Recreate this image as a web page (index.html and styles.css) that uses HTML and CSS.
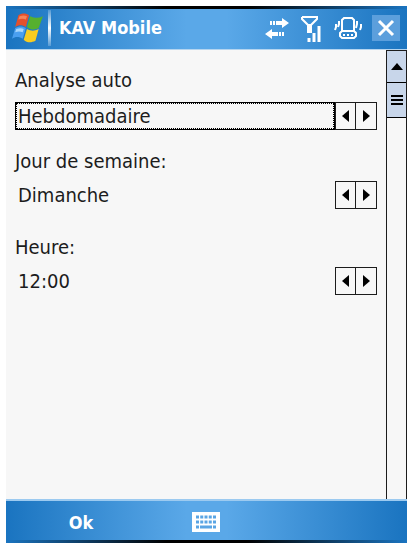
FILE: index.html
```html
<!DOCTYPE html>
<html lang="fr">
<head>
    <meta charset="UTF-8">
    <meta name="viewport" content="width=device-width, initial-scale=1.0">
    <title>KAV Mobile</title>
    <link rel="stylesheet" href="styles.css">
</head>
<body>

<div class="window">
    <header class="title-bar">
        <button type="button" class="bar-button start" aria-label="Start">
            <svg width="32" height="34" viewBox="1 2 30 28">
                <path d="M7 4c3-2 7-2 10 0l-3 11c-3-2-7-2-10 0z" fill="#e4502c"/>
                <path d="M18 5c4 2 8 2 12 0l-4 11c-4 2-7 2-11-1z" fill="#56b02e"/>
                <path d="M4 16c3-2 7-2 10 0l-3 10c-3-2-7-2-10 0z" fill="#4a9ff0"/>
                <path d="M15 17c4 2 7 2 11 0l-3 11c-4 2-8 2-11-1z" fill="#f8cc20"/>
                <path d="M8 5c3-1 5-1 7 0l-1 3c-2-1-5-1-7 0z" fill="#f5845a"/>
                <path d="M5 17c3-1 5-1 7 0l-1 3c-2-1-5-1-7 0z" fill="#a8d6fb"/>
            </svg>
        </button>
        <span class="divider"></span>
        <h1>KAV Mobile</h1>
        <div class="status">
            <svg width="26" height="22" viewBox="0 0 26 22" fill="#fff">
                <path d="M6 4h2v4H6zM9 4h2v4H9zM12 4h6V1l7 5-7 5V8h-6z"/>
                <path d="M20 15h-2v4h2zM17 15h-2v4h2zM14 15H8v-3l-7 5 7 5v-3h6z"/>
            </svg>
            <svg width="24" height="28" viewBox="0 0 24 28" fill="none" stroke="#fff">
                <path d="M2 3h15v2l-6 6v8M2 3v2l6 6v8" stroke-width="2"/>
                <path d="M9 10v9" stroke-width="4"/>
                <path d="M9 24v4M14 19v9M19 12v16" stroke-width="3"/>
            </svg>
            <svg width="28" height="24" viewBox="0 0 28 24" fill="none" stroke="#fff" stroke-width="2">
                <path d="M10 2h8l2 2v11l2 2v3l-2 2H8l-2-2v-3l2-2V4z"/>
                <path d="M8 15h12M9 19h2M13 19h2M17 19h2"/>
                <path d="M5 5v3l-1 3M2 8v3l-1 3M23 5v3l-1 4M27 8v3l-1 3"/>
            </svg>
        </div>
        <button type="button" class="bar-button close" aria-label="Fermer">
            <svg width="18" height="18" viewBox="0 0 18 18" stroke="#fff" stroke-width="3">
                <path d="M2 2l14 14M16 2L2 16"/>
            </svg>
        </button>
    </header>

    <div class="content">
        <form class="settings" id="settings">
            <div class="field focused">
                <label for="mode">Analyse auto</label>
                <div class="spinner">
                    <input type="text" id="mode" value="Hebdomadaire" readonly>
                    <button type="button" class="prev" aria-label="Précédent"></button>
                    <button type="button" class="next" aria-label="Suivant"></button>
                </div>
            </div>
            <div class="field">
                <label for="day">Jour de semaine:</label>
                <div class="spinner">
                    <input type="text" id="day" value="Dimanche" readonly>
                    <button type="button" class="prev" aria-label="Précédent"></button>
                    <button type="button" class="next" aria-label="Suivant"></button>
                </div>
            </div>
            <div class="field">
                <label for="hour">Heure:</label>
                <div class="spinner">
                    <input type="text" id="hour" value="12:00" readonly>
                    <button type="button" class="prev" aria-label="Précédent"></button>
                    <button type="button" class="next" aria-label="Suivant"></button>
                </div>
            </div>
        </form>
        <div class="scrollbar">
            <button type="button" class="scroll-up" aria-label="Défiler vers le haut"></button>
            <div class="thumb"><span></span></div>
        </div>
    </div>

    <footer class="menu-bar">
        <button type="submit" form="settings" class="bar-button ok">Ok</button>
        <button type="button" class="bar-button keyboard" aria-label="Clavier">
            <svg width="28" height="20" viewBox="0 0 28 20">
                <path d="M0 0h28v20H0z" fill="#fff"/>
                <path d="M4 5h20M4 10h20" stroke="#5aa5e4" stroke-width="3" stroke-dasharray="3 1.25"/>
                <path d="M4 15h3M8 15h12M21 15h3" stroke="#5aa5e4" stroke-width="3"/>
            </svg>
        </button>
        <span></span>
    </footer>
</div>

</body>
</html>
```

FILE: styles.css
```css
:root {
    --bar-dark: #1a74c0;
    --bar-light: #5aa8e8;
    --panel: #f7f7f7;
    --scroll: #c8d6ea;
    --ink: #1c1c1c;
}

* {
    box-sizing: border-box;
}

body {
    margin: 0;
    background-color: #fff;
    color: var(--ink);
    font-family: "DejaVu Sans Condensed", "DejaVu Sans", sans-serif;
    font-size: 20px;
}

.window {
    display: flex;
    flex-direction: column;
    min-height: 100vh;
    padding: 6px 3px 2px 6px;
}

button {
    padding: 0;
    font: inherit;
    color: inherit;
}

svg {
    display: block;
}

.title-bar,
.menu-bar {
    height: 44px;
    color: #fff;
    background:
        linear-gradient(90deg, var(--bar-dark), #000 40%, #000 60%, var(--bar-dark)) top / 100% 3px no-repeat,
        linear-gradient(90deg, var(--bar-dark), var(--bar-light) 45%, var(--bar-light) 55%, var(--bar-dark));
}

.title-bar {
    display: flex;
    align-items: center;
    padding: 0 7px 0 6px;
    border-bottom: 1px solid #b5d5f0;
}

.bar-button {
    border: none;
    background: none;
}

.divider {
    width: 3px;
    height: 36px;
    margin: 0 8px 0 4px;
    background: linear-gradient(rgba(255, 255, 255, 0.2), #fff, rgba(255, 255, 255, 0.2));
}

h1 {
    flex: 1;
    margin: 0;
    font-size: 18px;
    font-weight: bold;
}

.status {
    display: flex;
    align-items: center;
    gap: 10px;
    margin-right: 10px;
}

.close {
    display: flex;
    align-items: center;
    justify-content: center;
    width: 28px;
    height: 26px;
    background-color: #5c9fdc;
}

.content {
    display: flex;
    flex: 1;
    background-color: var(--panel);
}

.settings {
    flex: 1;
    padding: 18px 9px 0;
}

.field {
    margin-bottom: 26px;
}

.field label {
    display: block;
    margin-bottom: 8px;
    line-height: 24px;
}

.spinner {
    display: flex;
    height: 28px;
}

.spinner input {
    flex: 1;
    min-width: 0;
    padding: 0 2px;
    border: 1px solid transparent;
    background: none;
    color: inherit;
    font: inherit;
    outline: none;
}

.spinner button {
    display: flex;
    align-items: center;
    justify-content: center;
    width: 21px;
    border: 1px solid var(--ink);
    background: none;
}

.spinner .next {
    width: 22px;
    margin-left: -1px;
}

.prev::before,
.next::before {
    content: "";
    border: 6px solid transparent;
}

.prev::before {
    border-left-width: 0;
    border-right: 7px solid #000;
}

.next::before {
    border-right-width: 0;
    border-left: 7px solid #000;
}

.focused {
    margin-bottom: 19px;
}

.focused label {
    margin-bottom: 10px;
}

.spinner .prev {
    flex: none;
}

.focused input {
    border-color: #000;
    outline: 1px dotted #000;
    outline-offset: -2px;
}

.scrollbar {
    width: 21px;
    border: 1px solid var(--ink);
    border-bottom: none;
}

.scroll-up,
.thumb {
    display: flex;
    align-items: center;
    justify-content: center;
    width: 100%;
    border: none;
    border-bottom: 1px solid #000;
    background-color: var(--scroll);
}

.scroll-up {
    height: 32px;
}

.scroll-up::before {
    content: "";
    border: 6px solid transparent;
    border-top-width: 0;
    border-bottom: 7px solid #000;
}

.thumb {
    height: 35px;
}

.thumb span {
    width: 12px;
    height: 10px;
    background: repeating-linear-gradient(#000 0 2px, transparent 2px 4px);
}

.menu-bar {
    display: grid;
    grid-template-columns: 150px 100px 1fr;
    align-items: center;
    justify-items: center;
    border-top: 2px solid #9ccaf0;
    background-position: bottom, center;
}

.ok {
    font-size: 18px;
    font-weight: bold;
}
```
